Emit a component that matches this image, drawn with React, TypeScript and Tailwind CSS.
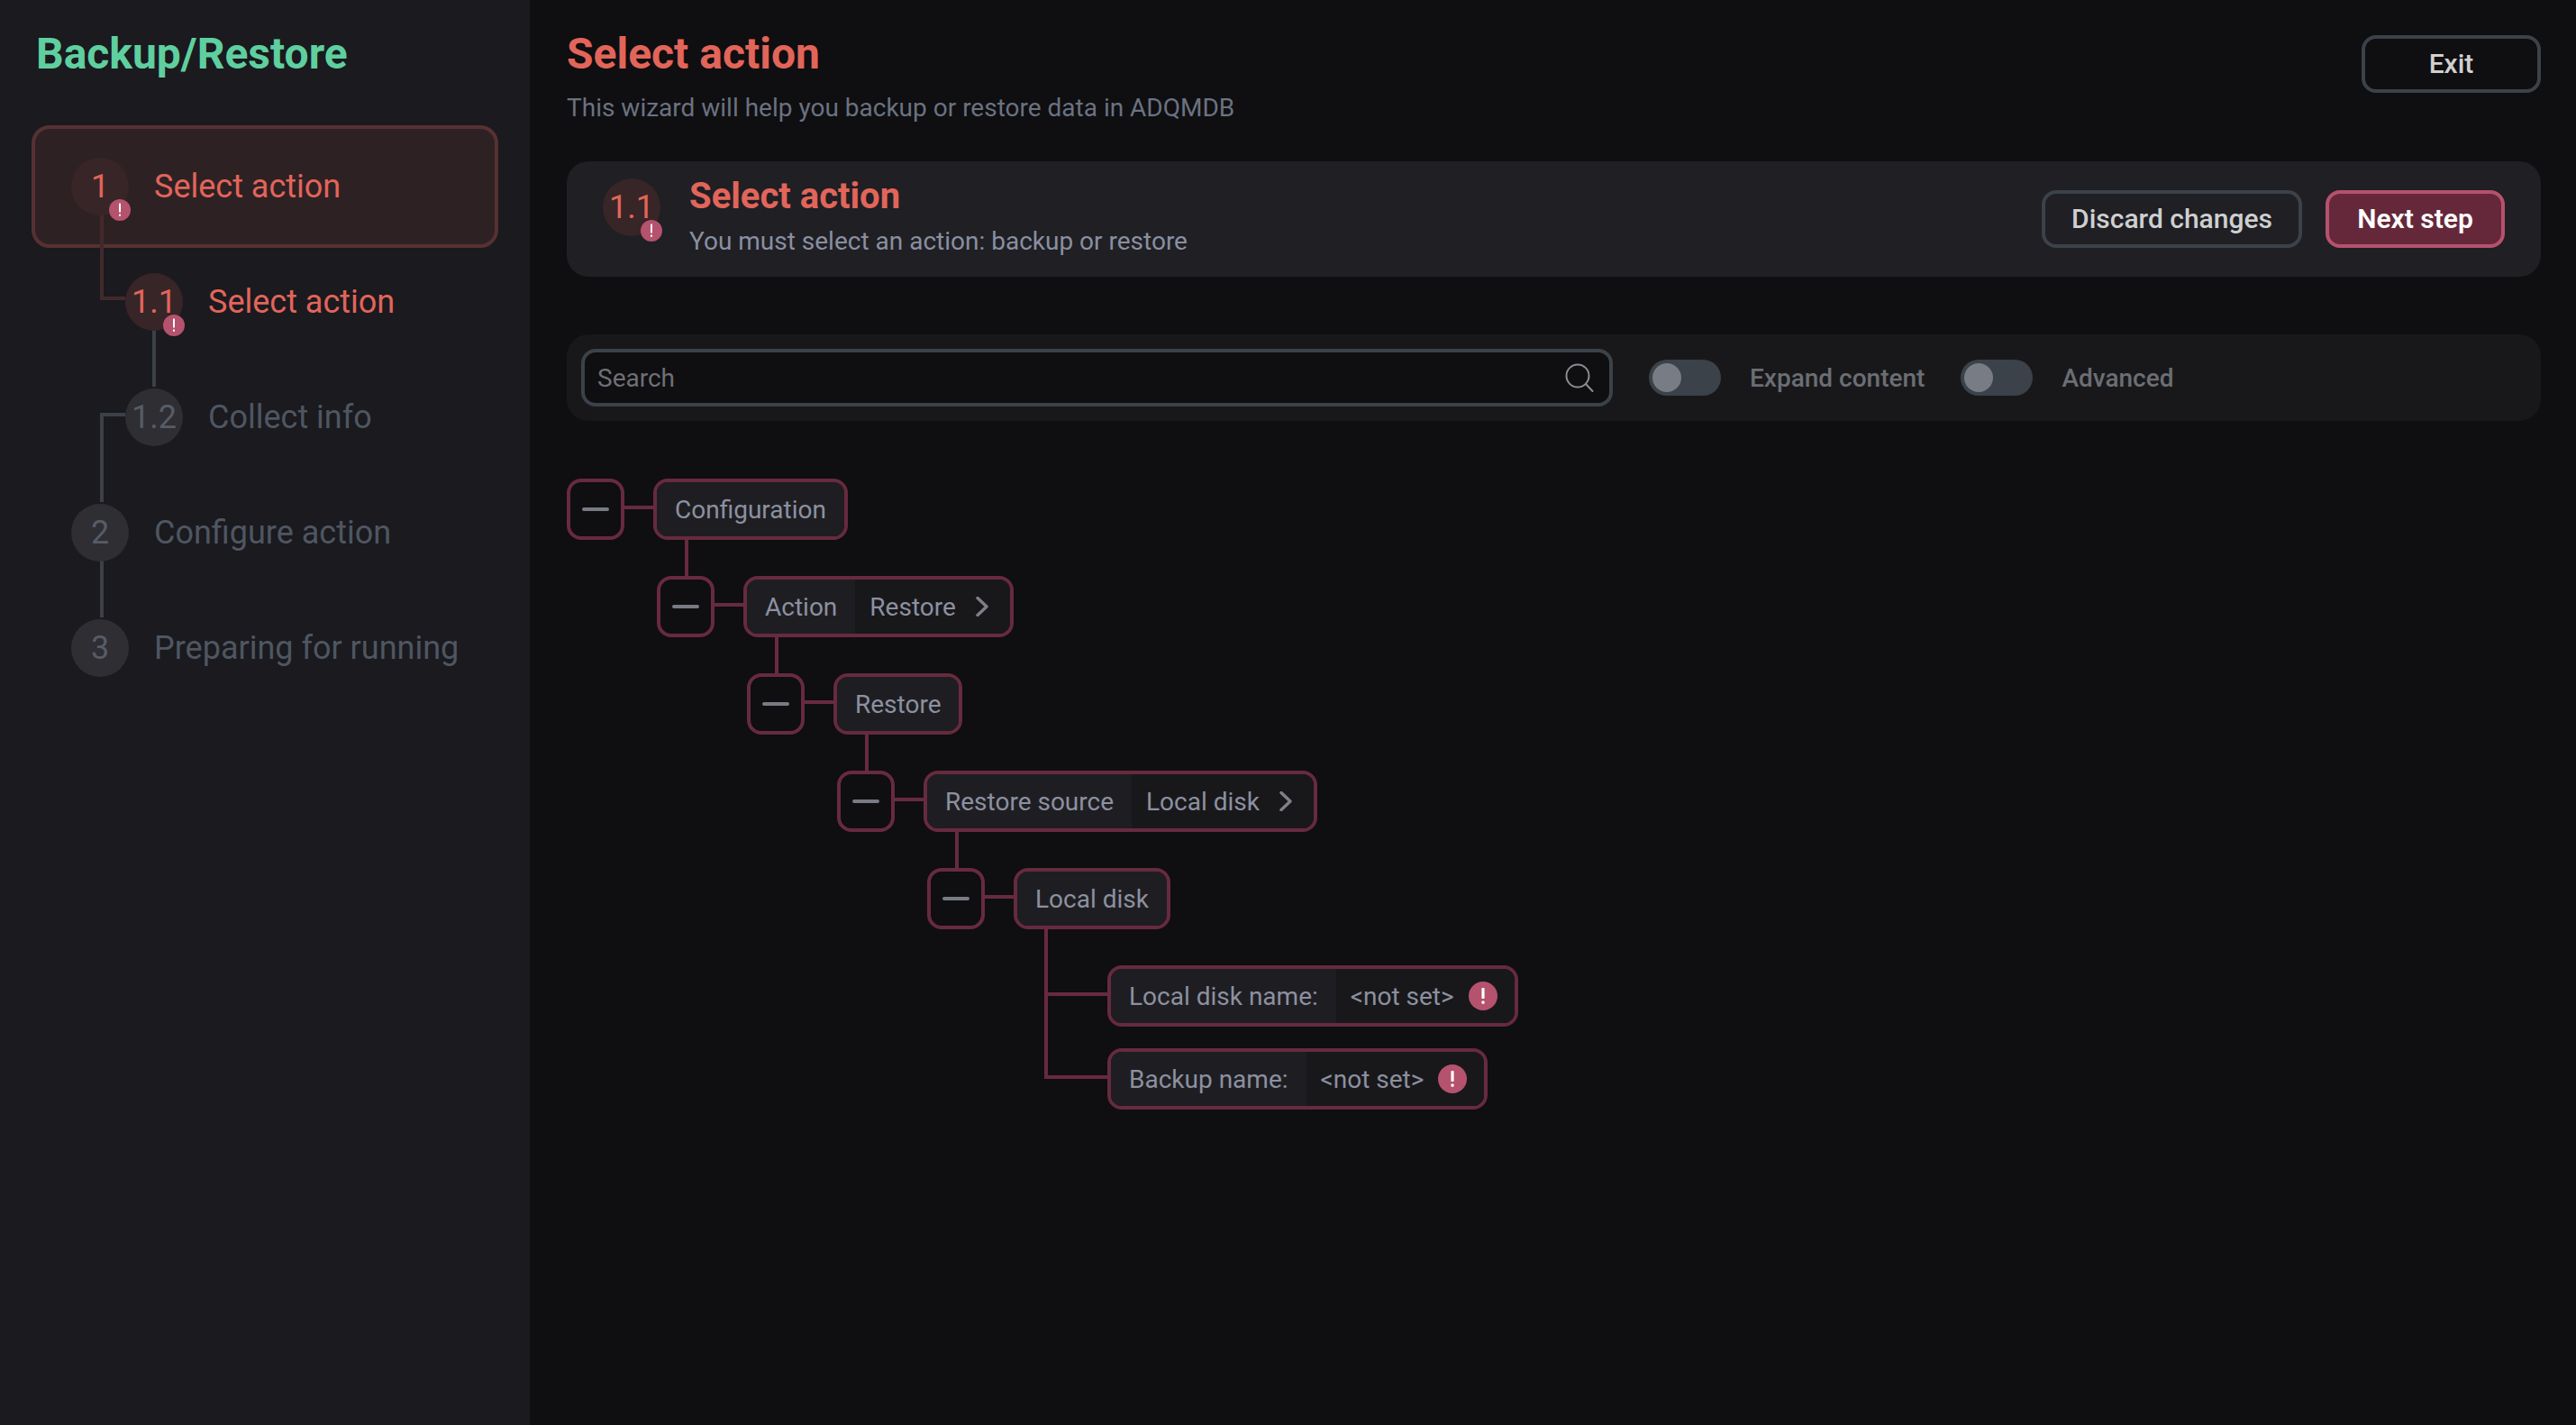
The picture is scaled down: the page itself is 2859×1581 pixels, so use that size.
import React from "react";

function Badge({ big = false }: { big?: boolean }) {
  if (big) {
    return (
      <svg width="32" height="32" viewBox="0 0 32 32" className="shrink-0">
        <circle cx="16" cy="16" r="16" fill="#b5526e" />
        <rect x="14.4" y="7" width="3.2" height="12" rx="1" fill="#fff" />
        <rect x="14.4" y="21.5" width="3.2" height="3.2" rx="1" fill="#fff" />
      </svg>
    );
  }
  return (
    <svg width="24" height="24" viewBox="0 0 24 24" className="absolute left-[42px] top-[46px]">
      <circle cx="12" cy="12" r="12" fill="#b5526e" />
      <rect x="11" y="4.5" width="2" height="10" rx="0.5" fill="#fff" />
      <rect x="11" y="16.5" width="2" height="2.2" rx="0.5" fill="#fff" />
    </svg>
  );
}

function Circle({ label, state }: { label: string; state: "error" | "muted" }) {
  const tone = state === "error" ? "bg-[#382527] text-[#e2655a]" : "bg-[#2e2e33] text-[#565c66]";
  return (
    <div className={`relative z-10 w-16 h-16 shrink-0 rounded-full flex items-center justify-center text-[36px] leading-none ${tone}`}>
      {label}
      {state === "error" && <Badge />}
    </div>
  );
}

function Step({ num, text, state, sub = false, active = false }: { num: string; text: string; state: "error" | "muted"; sub?: boolean; active?: boolean }) {
  const shell = active
    ? "h-[136px] -my-[4px] border-4 border-[#573132] bg-[#2e2124] rounded-[20px] pl-[40px]"
    : sub
      ? "h-[128px] pl-[104px]"
      : "h-[128px] pl-[44px]";
  return (
    <div className={`flex items-center gap-[28px] ${shell}`}>
      <Circle label={num} state={state} />
      <span className={`text-[36px] leading-none ${state === "error" ? "text-[#e2655a]" : "text-[#4f5661]"}`}>{text}</span>
    </div>
  );
}

function Sidebar() {
  return (
    <aside className="w-[588px] shrink-0 bg-[#1a1a1f] pl-[35px] pr-[35px] pt-[28px]">
      <h1 className="pl-[5px] text-[48px] leading-[64px] font-bold text-[#5fcf9f]">Backup/Restore</h1>
      <div className="relative mt-[51px]">
        <Step num="1" text="Select action" state="error" active />
        <Step num="1.1" text="Select action" state="error" sub />
        <Step num="1.2" text="Collect info" state="muted" sub />
        <Step num="2" text="Configure action" state="muted" />
        <Step num="3" text="Preparing for running" state="muted" />
        <div className="absolute left-[76px] top-[96px] w-1 h-[98px] bg-[#42292b]" />
        <div className="absolute left-[76px] top-[190px] w-[28px] h-1 bg-[#42292b]" />
        <div className="absolute left-[134px] top-[224px] w-1 h-[66px] bg-[#3b4147]" />
        <div className="absolute left-[76px] top-[319px] w-[28px] h-1 bg-[#3b4147]" />
        <div className="absolute left-[76px] top-[319px] w-1 h-[99px] bg-[#3b4147]" />
        <div className="absolute left-[76px] top-[480px] w-1 h-[66px] bg-[#3b4147]" />
      </div>
    </aside>
  );
}

function Toggle({ label }: { label: string }) {
  return (
    <div className="flex items-center gap-8 ml-10">
      <div className="w-20 h-10 rounded-full bg-[#3b4249] flex items-center pl-1">
        <div className="w-8 h-8 rounded-full bg-[#787d85]" />
      </div>
      <span className="pt-[2px] text-[28px] leading-none font-medium text-[#6b6e73]">{label}</span>
    </div>
  );
}

function Minus({ vertical = false }: { vertical?: boolean }) {
  return (
    <div className="relative w-16 h-[68px] shrink-0 rounded-[16px] border-4 border-[#672a3e] flex items-center justify-center">
      <div className="w-[30px] h-1 rounded-full bg-[#787b83]" />
      <div className="absolute left-[60px] top-[26px] w-[32px] h-1 bg-[#672a3e]" />
      {vertical && <div className="absolute left-[27px] -top-[44px] w-1 h-10 bg-[#672a3e]" />}
    </div>
  );
}

function Chevron() {
  return (
    <svg width="14" height="22" viewBox="0 0 14 22" fill="none" className="ml-[22px] shrink-0">
      <path d="M2 1.5 L12 11 L2 20.5" stroke="#7d8088" strokeWidth="3.4" strokeLinecap="round" strokeLinejoin="round" />
    </svg>
  );
}

function Node({ label, value, error = false, chevron = false, pr = "" }: { label: string; value?: string; error?: boolean; chevron?: boolean; pr?: string }) {
  return (
    <div className="flex h-[68px] rounded-[16px] border-4 border-[#672a3e] overflow-hidden text-[28px] leading-none text-[#8d90a0]">
      <div className="h-full px-[20px] pt-[2px] flex items-center bg-[#1e1e22] whitespace-pre">{label}</div>
      {value && (
        <div className={`h-full flex items-center bg-[#18181b] pl-[16px] ${pr}`}>
          <span className="pt-[2px]">{value}</span>
          {chevron && <Chevron />}
          {error && <span className="ml-[16px] flex"><Badge big /></span>}
        </div>
      )}
    </div>
  );
}

function Branch({ indent, vertical, label, value }: { indent: string; vertical?: boolean; label: string; value?: string }) {
  return (
    <div className={`flex gap-[32px] ${indent}`}>
      <Minus vertical={vertical} />
      <Node label={label} value={value} chevron={!!value} pr={value ? "pr-[24px]" : ""} />
    </div>
  );
}

function Leaf({ label, top, h, mt }: { label: string; top: string; h: string; mt: string }) {
  return (
    <div className={`relative ml-[600px] w-fit ${mt}`}>
      <div className={`absolute left-[-70px] w-1 bg-[#672a3e] ${top} ${h}`} />
      <div className="absolute left-[-70px] top-[30px] w-[70px] h-1 bg-[#672a3e]" />
      <Node label={label} value="<not set>" error pr="pr-[19px]" />
    </div>
  );
}

function Tree() {
  return (
    <div className="mt-16 flex flex-col gap-10">
      <Branch indent="ml-0" label="Configuration" />
      <Branch indent="ml-[100px]" vertical label="Action" value="Restore" />
      <Branch indent="ml-[200px]" vertical label="Restore" />
      <Branch indent="ml-[300px]" vertical label="Restore source" value="Local disk" />
      <Branch indent="ml-[400px]" vertical label="Local disk" />
      <div>
        <Leaf label="Local disk name:" top="top-[-40px]" h="h-[74px]" mt="mt-0" />
        <Leaf label="Backup name:" top="top-[-58px]" h="h-[92px]" mt="mt-[24px]" />
      </div>
    </div>
  );
}

function Main() {
  return (
    <main className="flex-1 min-w-0 pl-[41px] pr-[39px] pt-[28px]">
      <header className="flex justify-between items-start">
        <div>
          <h2 className="text-[48px] leading-[64px] font-bold text-[#e2655a]">Select action</h2>
          <p className="mt-2 text-[28px] leading-[40px] text-[#6b7280]">This wizard will help you backup or restore data in ADQMDB</p>
        </div>
        <button className="mt-[11px] w-[199px] h-16 pb-[2px] rounded-[16px] border-4 border-[#3b4249] text-[#d0d0d0] text-[30px] font-medium">Exit</button>
      </header>

      <section className="mt-[39px] h-[128px] rounded-[24px] bg-[#1f1f24] pl-10 pr-10 pt-[15px] flex items-start">
        <div className="mt-1"><Circle label="1.1" state="error" /></div>
        <div className="ml-[32px]">
          <div className="text-[40px] leading-[48px] font-bold text-[#e2655a]">Select action</div>
          <div className="mt-[6px] text-[28px] leading-[40px] text-[#8a8fa0]">You must select an action: backup or restore</div>
        </div>
        <div className="ml-auto self-center -mt-[15px] flex gap-[26px]">
          <button className="w-[289px] h-16 pb-[2px] rounded-[16px] border-4 border-[#3b4249] text-[#cfcfd0] text-[30px] font-medium">Discard changes</button>
          <button className="w-[199px] h-16 pb-[2px] rounded-[16px] border-4 border-[#b5526e] bg-[#65283a] text-white text-[30px] font-semibold">Next step</button>
        </div>
      </section>

      <section className="mt-16 h-24 rounded-[24px] bg-[#18181b] pl-4 flex items-center">
        <div className="w-[1145px] h-16 rounded-[16px] border-4 border-[#3b4249] bg-[#0f0e11] pl-[14px] pr-[17px] flex items-center justify-between">
          <span className="pt-[2px] text-[28px] leading-none text-[#6e7075]">Search</span>
          <svg width="32" height="32" viewBox="0 0 32 32" fill="none" stroke="#8a8d92" strokeWidth="2" strokeLinecap="round">
            <circle cx="14" cy="14" r="12.5" />
            <path d="M23 23 L30.5 31" />
          </svg>
        </div>
        <Toggle label="Expand content" />
        <Toggle label="Advanced" />
      </section>

      <Tree />
    </main>
  );
}

export default function App() {
  return (
    <div className="flex w-full h-[1581px] overflow-hidden bg-[#0f0e11] font-[Roboto,sans-serif]">
      <Sidebar />
      <Main />
    </div>
  );
}
